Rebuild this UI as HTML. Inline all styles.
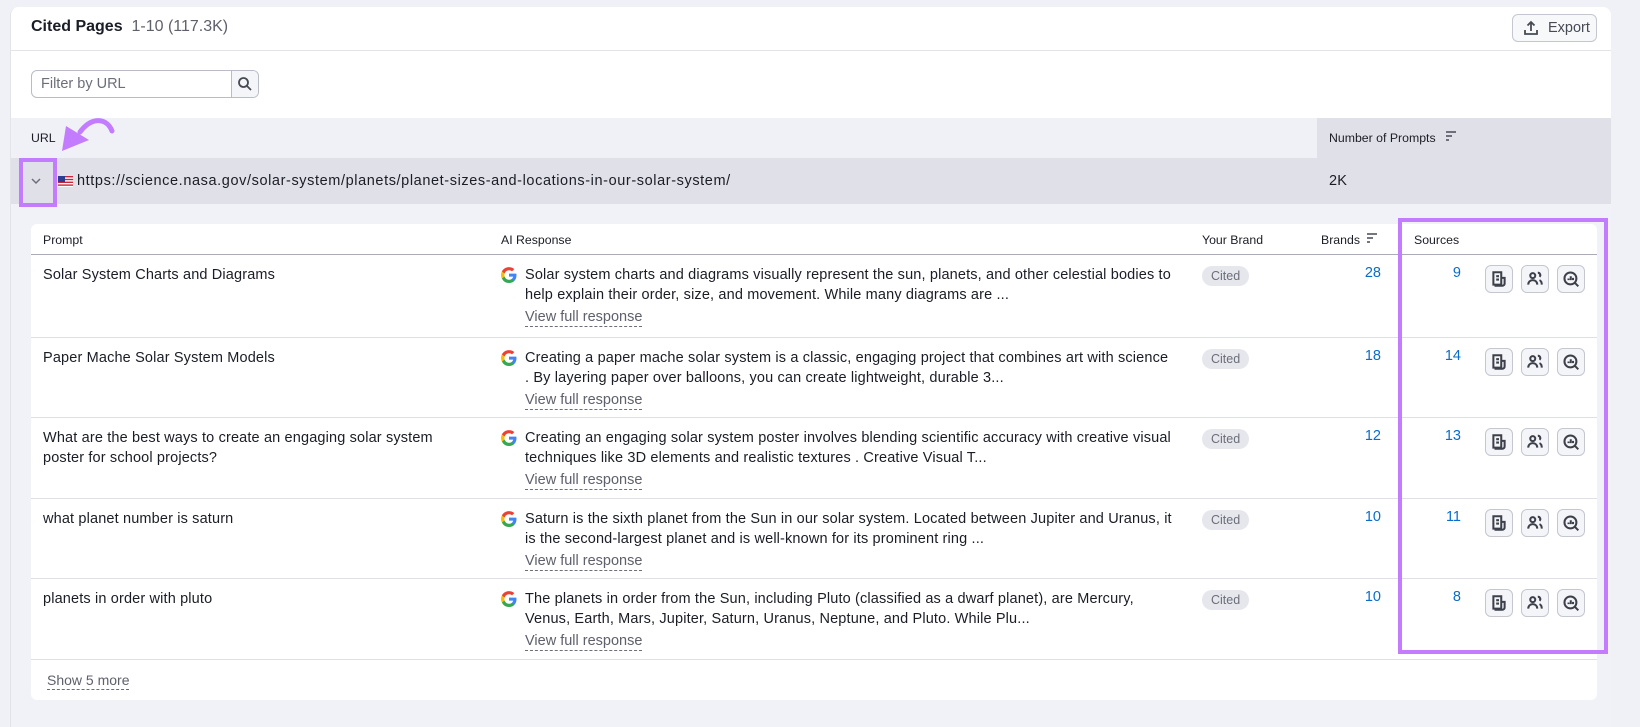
<!DOCTYPE html>
<html><head><meta charset="utf-8"><style>
*{box-sizing:border-box;margin:0;padding:0}
body{width:1640px;height:721px;background:#f0f1f6;font-family:"Liberation Sans",sans-serif;color:#1b1d26;position:relative;overflow:hidden}
.a{position:absolute;white-space:nowrap}
.card{position:absolute;left:10px;top:7px;width:1601px;height:720px;background:#f1f2f7;border-left:1px solid #e3e4ea;border-radius:8px 8px 0 0;overflow:hidden}
.top{position:absolute;left:0;top:0;width:100%;height:111px;background:#fff}
.t14{font-size:14.5px;letter-spacing:0.15px}
.hd{font-size:12.3px;color:#1b1d26}
.blue{color:#0a6ccb;font-size:14.5px}
.cited{position:absolute;background:#e6e7ed;color:#6c6e79;font-size:12.5px;border-radius:10px;padding:2px 9px;height:20px;line-height:16px}
.vfr{font-size:14.5px;color:#5e606b;border-bottom:1px dashed #6c6e79;line-height:17px}
.btn{position:absolute;width:28px;height:28px;border:1px solid #c4c7d0;border-radius:6px;background:#f4f5f8;display:flex;align-items:center;justify-content:center}
.sep{position:absolute;left:31px;width:1566px;height:1px;background:#dfe0e6}
</style></head><body>
<div class="card">
 <div class="top"></div>
</div>
<div class="a" style="left:31px;top:18px;font-size:16px;font-weight:bold">Cited Pages <span style="font-weight:normal;color:#5e606b">&nbsp;1-10 (117.3K)</span></div>
<div class="a" style="left:1512px;top:14px;width:85px;height:28px;border:1px solid #c4c7d0;border-radius:6px;background:#f7f8fa;font-size:14.5px;color:#474a55;line-height:26px;padding-left:35px">Export</div>
<svg class="a" style="left:1522px;top:19px" width="18" height="18" viewBox="0 0 18 18" fill="none" stroke="#474a55" stroke-width="1.8"><path d="M9 12V3M5.5 6.5L9 3l3.5 3.5M3 11v4h12v-4"/></svg>
<div class="a" style="left:11px;top:50px;width:1600px;height:1px;background:#e3e4ea"></div>
<div class="a" style="left:31px;top:70px;width:228px;height:28px;border:1px solid #b9bcc6;border-radius:6px;background:#fff;font-size:14.5px;color:#6c6e79;line-height:26px;padding-left:9px">Filter by URL</div>
<div class="a" style="left:231px;top:71px;width:27px;height:26px;border-left:1px solid #b9bcc6;background:#f4f5f8;border-radius:0 5px 5px 0"></div>
<svg class="a" style="left:237px;top:76px" width="16" height="16" viewBox="0 0 16 16" fill="none" stroke="#474a55" stroke-width="1.8"><circle cx="6.5" cy="6.5" r="4.5"/><path d="M10 10l4 4"/></svg>
<div class="a" style="left:11px;top:118px;width:1306px;height:40px;background:#f0f1f6"></div>
<div class="a" style="left:1317px;top:118px;width:294px;height:40px;background:#e0e1e8"></div>
<div class="a hd" style="left:31px;top:131px">URL</div>
<div class="a hd" style="left:1329px;top:131px">Number of Prompts</div>
<svg class="a" style="left:1445px;top:130px" width="12" height="12" viewBox="0 0 12 12" stroke="#474a55" stroke-width="1.6"><path d="M1 2h10M1 6h6M1 10h3"/></svg>
<div class="a" style="left:11px;top:158px;width:1600px;height:46px;background:#e0e1e8"></div>
<svg class="a" style="left:30px;top:176px" width="12" height="10" viewBox="0 0 12 10" fill="none" stroke="#6c6e79" stroke-width="1.5"><path d="M2 3l4 4 4-4"/></svg>
<div class="a" style="left:19px;top:158px;width:38px;height:49px;border:4px solid #c47cff"></div>
<svg class="a" style="left:58px;top:176px" width="15" height="11" viewBox="0 0 15 11"><rect width="15" height="11" fill="#fff"/><g fill="#c8243a"><rect y="0" width="15" height="1.4"/><rect y="2.8" width="15" height="1.4"/><rect y="5.6" width="15" height="1.4"/><rect y="8.4" width="15" height="1.4"/></g><rect width="7" height="6" fill="#2a3d8f"/></svg>
<div class="a" style="left:77px;top:173px;font-size:14.5px;letter-spacing:0.6px">https://science.nasa.gov/solar-system/planets/planet-sizes-and-locations-in-our-solar-system/</div>
<div class="a t14" style="left:1329px;top:173px">2K</div>
<svg class="a" style="left:50px;top:110px" width="70" height="48" viewBox="0 0 70 48" fill="none"><path d="M62 21C57 8 42 6 30 22" stroke="#c47cff" stroke-width="5" stroke-linecap="round"/><path d="M12 41L16 16L39 30Z" fill="#c47cff"/></svg>
<div class="a" style="left:31px;top:224px;width:1566px;height:476px;background:#fff;border-radius:6px"></div>
<div class="a hd" style="left:43px;top:233px">Prompt</div>
<div class="a hd" style="left:501px;top:233px">AI Response</div>
<div class="a hd" style="left:1202px;top:233px">Your Brand</div>
<div class="a hd" style="left:1321px;top:233px">Brands</div>
<svg class="a" style="left:1366px;top:232px" width="12" height="12" viewBox="0 0 12 12" stroke="#474a55" stroke-width="1.6"><path d="M1 2h10M1 6h6M1 10h3"/></svg>
<div class="a hd" style="left:1414px;top:233px">Sources</div>
<div class="sep" style="top:254px;background:#a9acb6"></div>
<div class="sep" style="top:337px"></div>
<div class="sep" style="top:417px"></div>
<div class="sep" style="top:498px"></div>
<div class="sep" style="top:578px"></div>
<div class="sep" style="top:659px"></div>
<div class="a" style="left:47px;top:672px;font-size:14px;color:#5e606b;border-bottom:1px dashed #6c6e79;line-height:17px">Show 5 more</div>

<div id="rows"></div>
<div class="a" style="left:1398px;top:218px;width:210px;height:436px;border:4px solid #c47cff"></div>

<svg width="0" height="0" style="position:absolute"><defs>
<g id="g"><path d="M15.5 8.2c0-.6-.1-1.1-.2-1.6H8v3h4.2a3.6 3.6 0 0 1-1.6 2.4v2h2.6c1.5-1.4 2.3-3.4 2.3-5.8z" fill="#4285f4"/><path d="M8 16c2.2 0 4-.7 5.2-2l-2.6-2c-.7.5-1.6.8-2.6.8-2 0-3.8-1.4-4.4-3.3H.9v2.1A8 8 0 0 0 8 16z" fill="#34a853"/><path d="M3.6 9.5a4.8 4.8 0 0 1 0-3V4.4H.9a8 8 0 0 0 0 7.2z" fill="#fbbc05"/><path d="M8 3.2c1.2 0 2.2.4 3 1.2l2.3-2.3A8 8 0 0 0 .9 4.4l2.7 2.1C4.2 4.6 6 3.2 8 3.2z" fill="#ea4335"/></g>
</defs></svg>

<script>
var d=[["Solar System Charts and Diagrams","","Solar system charts and diagrams visually represent the sun, planets, and other celestial bodies to","help explain their order, size, and movement. While many diagrams are ...","28","9"],
["Paper Mache Solar System Models","","Creating a paper mache solar system is a classic, engaging project that combines art with science",". By layering paper over balloons, you can create lightweight, durable 3...","18","14"],
["What are the best ways to create an engaging solar system","poster for school projects?","Creating an engaging solar system poster involves blending scientific accuracy with creative visual","techniques like 3D elements and realistic textures . Creative Visual T...","12","13"],
["what planet number is saturn","","Saturn is the sixth planet from the Sun in our solar system. Located between Jupiter and Uranus, it","is the second-largest planet and is well-known for its prominent ring ...","10","11"],
["planets in order with pluto","","The planets in order from the Sun, including Pluto (classified as a dwarf planet), are Mercury,","Venus, Earth, Mars, Jupiter, Saturn, Uranus, Neptune, and Pluto. While Plu...","10","8"]];
var tops=[254,337,417,498,578],h="";
var ic=['<svg width="18" height="18" viewBox="0 0 16 16" fill="none" stroke="#3d404b" stroke-width="1.8"><path d="M3 2h7v11H3zM5.5 5.5h2.5M5.5 8.5h2.5M10 7h3v5a2 2 0 0 1-2 2H4"/></svg>',
'<svg width="18" height="18" viewBox="0 0 16 16" fill="none" stroke="#3d404b" stroke-width="1.8"><circle cx="6" cy="5" r="2.2"/><path d="M2 13c0-2.5 1.8-4 4-4s4 1.5 4 4M10.5 2.5a2 2 0 0 1 1.5 3.5M12 9c1.3.6 2 1.9 2 4"/></svg>',
'<svg width="18" height="18" viewBox="0 0 16 16" fill="none" stroke="#3d404b" stroke-width="1.8"><circle cx="7.5" cy="7.5" r="5.3"/><path d="M11.5 11.5L14.5 14.5M5.8 9V7.5M7.8 9V5.5M9.8 9V7"/></svg>'];
d.forEach(function(r,i){var t=tops[i]+11;
h+='<div class="a t14" style="left:43px;top:'+t+'px;line-height:20px">'+r[0]+(r[1]?'<br>'+r[1]:'')+'</div>';
h+='<svg class="a" style="left:501px;top:'+(t+2)+'px" width="16" height="16" viewBox="0 0 16 16"><use href="#g"/></svg>';
h+='<div class="a t14" style="left:525px;top:'+t+'px;line-height:20px">'+r[2]+'<br>'+r[3]+'</div>';
h+='<div class="a vfr" style="left:525px;top:'+(t+44)+'px">View full response</div>';
h+='<div class="cited" style="left:1202px;top:'+(t+1)+'px">Cited</div>';
h+='<div class="a blue" style="right:'+(1640-1381)+'px;top:'+t+'px">'+r[4]+'</div>';
h+='<div class="a blue" style="right:'+(1640-1461)+'px;top:'+t+'px">'+r[5]+'</div>';
[1485,1521,1557].forEach(function(x,k){h+='<div class="btn" style="left:'+x+'px;top:'+(t)+'px">'+ic[k]+'</div>';});
});
document.getElementById('rows').outerHTML=h;
</script>
</body></html>
